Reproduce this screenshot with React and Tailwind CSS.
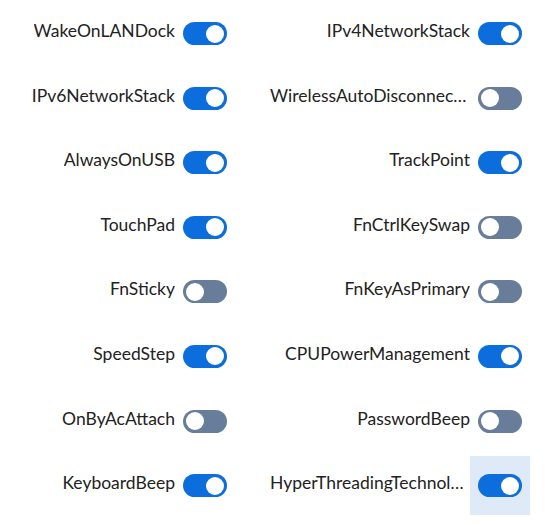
import React from "react";

const items = [
  ["WakeOnLANDock", true, "IPv4NetworkStack", true],
  ["IPv6NetworkStack", true, "WirelessAutoDisconnection", false],
  ["AlwaysOnUSB", true, "TrackPoint", true],
  ["TouchPad", true, "FnCtrlKeySwap", false],
  ["FnSticky", false, "FnKeyAsPrimary", false],
  ["SpeedStep", true, "CPUPowerManagement", true],
  ["OnByAcAttach", false, "PasswordBeep", false],
  ["KeyboardBeep", true, "HyperThreadingTechnology", true],
];

function Toggle({ on }) {
  return (
    <div
      className={`w-[44px] h-[23px] rounded-full flex items-center px-[3px] ${
        on ? "bg-[#0b6edc] justify-end" : "bg-[#687d9a] justify-start"
      }`}
    >
      <div className="w-[18px] h-[18px] rounded-full bg-white" />
    </div>
  );
}

function Cell({ label, on, highlight }) {
  return (
    <div className="flex items-center justify-end">
      <span className="max-w-[200px] truncate text-right text-[17.5px] leading-[24px] text-[#222] mb-[5px]">
        {label}
      </span>
      <div
        className={`w-[60px] h-[59px] flex items-center justify-center ${
          highlight ? "bg-[#dfeaf8]" : ""
        }`}
      >
        <Toggle on={on} />
      </div>
    </div>
  );
}

export default function App() {
  return (
    <div
      className="w-[549px] h-[525px] bg-white pt-[4px]"
      style={{ fontFamily: "Lato, 'Noto Sans', sans-serif" }}
    >
      <div className="grid grid-cols-[235px_295px] gap-y-[5.6px]">
        {items.map(([a, aon, b, bon], i) => (
          <React.Fragment key={i}>
            <Cell label={a} on={aon} />
            <Cell label={b} on={bon} highlight={i === 7} />
          </React.Fragment>
        ))}
      </div>
    </div>
  );
}
